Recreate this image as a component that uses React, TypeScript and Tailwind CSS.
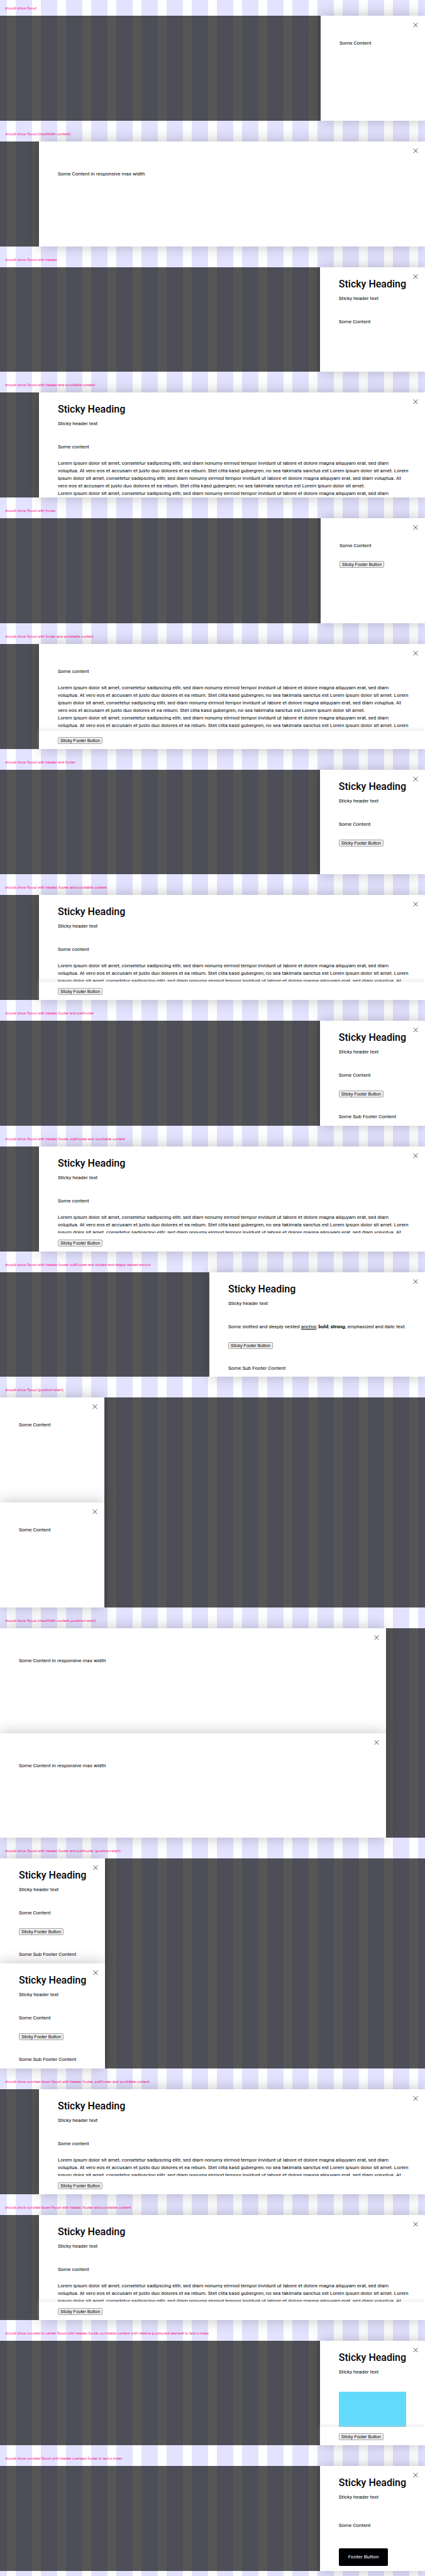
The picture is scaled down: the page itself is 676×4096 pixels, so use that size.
import React from "react";

type FlyoutProps = {
  size?: "fit" | "anchor" | "max";
  header?: boolean;
  footer?: React.ReactNode;
  footerShadow?: boolean;
  subFooter?: boolean;
  scroll?: boolean;
  children: React.ReactNode;
};

const PARAGRAPH_LINES = [
  "Lorem ipsum dolor sit amet, consetetur sadipscing elitr, sed diam nonumy eirmod tempor invidunt ut labore et dolore magna aliquyam erat, sed diam",
  "voluptua. At vero eos et accusam et justo duo dolores et ea rebum. Stet clita kasd gubergren, no sea takimata sanctus est Lorem ipsum dolor sit amet. Lorem",
  "ipsum dolor sit amet, consetetur sadipscing elitr, sed diam nonumy eirmod tempor invidunt ut labore et dolore magna aliquyam erat, sed diam voluptua. At",
  "vero eos et accusam et justo duo dolores et ea rebum. Stet clita kasd gubergren, no sea takimata sanctus est Lorem ipsum dolor sit amet.",
];

const widths = {
  fit: "min-w-[166px]",
  anchor: "min-w-[343px]",
  max: "min-w-0 grow",
};

function CloseButton() {
  return (
    <button type="button" aria-label="Dismiss flyout" className="absolute top-[11px] right-[11px] size-2">
      <svg viewBox="0 0 8 8" className="size-2" fill="none" stroke="#010205" strokeWidth="0.7">
        <path d="M0.5 0.2 L7.5 7.2 M7.5 0.2 L0.5 7.2" />
      </svg>
    </button>
  );
}

function PlainButton() {
  return (
    <button
      type="button"
      className="block h-[11px] rounded-xs border border-[#a6a6a6] bg-[#efefef] px-[3px] font-['Liberation_Sans',Arial,sans-serif] text-[7px] leading-[9px] whitespace-nowrap text-black"
    >
      Sticky Footer Button
    </button>
  );
}

function PrimaryButton() {
  return (
    <button type="button" className="block h-7 rounded-xs bg-[#010205] px-[15px] text-[8px] leading-3 whitespace-nowrap text-[#fbfcff]">
      Footer Button
    </button>
  );
}

function Flyout({ size = "fit", header, footer, footerShadow, subFooter, scroll, children }: FlyoutProps) {
  return (
    <aside
      role="dialog"
      className={`relative flex flex-col bg-white text-[8px] leading-3 text-[#010205] shadow-[0_0_21px_rgba(0,0,0,0.25)] ${widths[size]}`}
    >
      <CloseButton />
      {header ? (
        <header className="h-[81px] shrink-0 px-[30px] pt-[17px]">
          <h3 className="text-[16px] leading-5 font-medium whitespace-nowrap">Sticky Heading</h3>
          <p className="mt-[7px]">Sticky header text</p>
        </header>
      ) : (
        <div className="h-[38px] shrink-0" />
      )}
      <div className={scroll ? "min-h-0 flex-1 basis-0 overflow-hidden px-[30px]" : "shrink-0 px-[30px] pb-2"}>
        {children}
      </div>
      {footer && (
        <footer
          className={`relative shrink-0 bg-white px-[30px] pt-2.5 pb-2 ${
            footerShadow ? "shadow-[0_-3px_5px_rgba(204,204,204,0.35)]" : ""
          }`}
        >
          {footer}
        </footer>
      )}
      {subFooter && <p className="mt-[17px] px-[30px]">Some Sub Footer Content</p>}
    </aside>
  );
}

function LongContent({ lines }: { lines: number }) {
  return (
    <>
      <p className="mb-3.5">Some content</p>
      <p className="whitespace-nowrap">
        {Array.from({ length: lines }, (_, i) => (
          <span key={i} className="block">
            {PARAGRAPH_LINES[i % PARAGRAPH_LINES.length]}
          </span>
        ))}
      </p>
    </>
  );
}

const stripes =
  "bg-[repeating-linear-gradient(90deg,#e3e3ff_0_11px,#ffffff_11px_25px,#e3e3ff_25px_40px)]";
const dimmedStripes =
  "bg-[repeating-linear-gradient(90deg,#4e4e58_0_11px,#555655_11px_25px,#4e4e58_25px_40px)]";

function Story({
  title,
  position = "end",
  inset,
  children,
}: {
  title: string;
  position?: "start" | "end";
  inset?: boolean;
  children: React.ReactNode;
}) {
  const panels = React.Children.toArray(children);
  const double = panels.length > 1;
  return (
    <>
      <h2 className="flex h-[33px] shrink-0 items-end px-2 pb-2 text-[6px] leading-2 text-[#ff1493] first:h-[25px]">
        {title}
      </h2>
      <div
        className={`flex min-h-0 shrink-0 flex-col ${dimmedStripes} ${
          double ? "grow-2 basis-[332px]" : "grow basis-[166px]"
        }`}
      >
        {panels.map((panel, i) => (
          <div
            key={i}
            className={`flex min-h-0 flex-1 basis-0 ${
              position === "start"
                ? inset
                  ? "justify-start pr-[62px]"
                  : "justify-start"
                : inset
                  ? "justify-end pl-[62px]"
                  : "justify-end"
            }`}
          >
            {panel}
          </div>
        ))}
      </div>
    </>
  );
}

export default function App() {
  const button = <PlainButton />;
  return (
    <main
      className={`flex min-h-screen flex-col overflow-hidden pb-2 font-[Roboto,'Liberation_Sans',sans-serif] ${stripes}`}
    >
      <Story title="should show flyout">
        <Flyout>Some Content</Flyout>
      </Story>
      <Story title="should show flyout (maxWidth content)" inset>
        <Flyout size="max">
          <p className="mt-2">Some Content in responsive max width</p>
        </Flyout>
      </Story>
      <Story title="should show flyout with header">
        <Flyout header>Some Content</Flyout>
      </Story>
      <Story title="should show flyout with header and scrollable content" inset>
        <Flyout size="max" header scroll>
          <LongContent lines={5} />
        </Flyout>
      </Story>
      <Story title="should show flyout with footer">
        <Flyout footer={button}>Some Content</Flyout>
      </Story>
      <Story title="should show flyout with footer and scrollable content" inset>
        <Flyout size="max" footer={button} footerShadow scroll>
          <LongContent lines={6} />
        </Flyout>
      </Story>
      <Story title="should show flyout with header and footer">
        <Flyout header footer={button}>
          Some Content
        </Flyout>
      </Story>
      <Story title="should show flyout with header, footer and scrollable content" inset>
        <Flyout size="max" header footer={button} footerShadow scroll>
          <LongContent lines={3} />
        </Flyout>
      </Story>
      <Story title="should show flyout with header, footer and subFooter">
        <Flyout header footer={button} subFooter>
          Some Content
        </Flyout>
      </Story>
      <Story title="should show flyout with header, footer, subFooter and scrollable content" inset>
        <Flyout size="max" header footer={button} scroll>
          <LongContent lines={3} />
        </Flyout>
      </Story>
      <Story title="should show flyout with header, footer, subFooter and slotted and deeply nested anchor">
        <Flyout size="anchor" header footer={button} subFooter>
          <p className="whitespace-nowrap">
            Some slotted and deeply nested{" "}
            <a href="#" className="underline">
              anchor
            </a>
            , <b>bold</b>, <strong>strong</strong>, <em>emphasized</em> and <i>italic</i> text.
          </p>
        </Flyout>
      </Story>
      <Story title="should show flyout (position=start)" position="start">
        <Flyout>Some Content</Flyout>
        <Flyout>Some Content</Flyout>
      </Story>
      <Story title="should show flyout (maxWidth content, position=start)" position="start" inset>
        <Flyout size="max">
          <p className="mt-2">Some Content in responsive max width</p>
        </Flyout>
        <Flyout size="max">
          <p className="mt-2">Some Content in responsive max width</p>
        </Flyout>
      </Story>
      <Story title="should show flyout with header, footer and subFooter (position=start)" position="start">
        <Flyout header footer={button} subFooter>
          Some Content
        </Flyout>
        <Flyout header footer={button} subFooter>
          Some Content
        </Flyout>
      </Story>
      <Story title="should show scrolled down flyout with header, footer, subFooter and scrollable content" inset>
        <Flyout size="max" header footer={button} scroll>
          <LongContent lines={3} />
        </Flyout>
      </Story>
      <Story title="should show scrolled down flyout with header, footer and scrollable content" inset>
        <Flyout size="max" header footer={button} footerShadow scroll>
          <LongContent lines={3} />
        </Flyout>
      </Story>
      <Story title="should show scrolled to center flyout with header, footer, scrollable content with relative positioned element to test z-index">
        <Flyout header footer={button} footerShadow scroll>
          <div className="h-24 bg-[#61dafb]" />
        </Flyout>
      </Story>
      <Story title="should show scrolled flyout until header overlaps footer to test z-index">
        <Flyout header footer={<PrimaryButton />} scroll>
          <p className="mt-2">Some Content</p>
        </Flyout>
      </Story>
    </main>
  );
}
